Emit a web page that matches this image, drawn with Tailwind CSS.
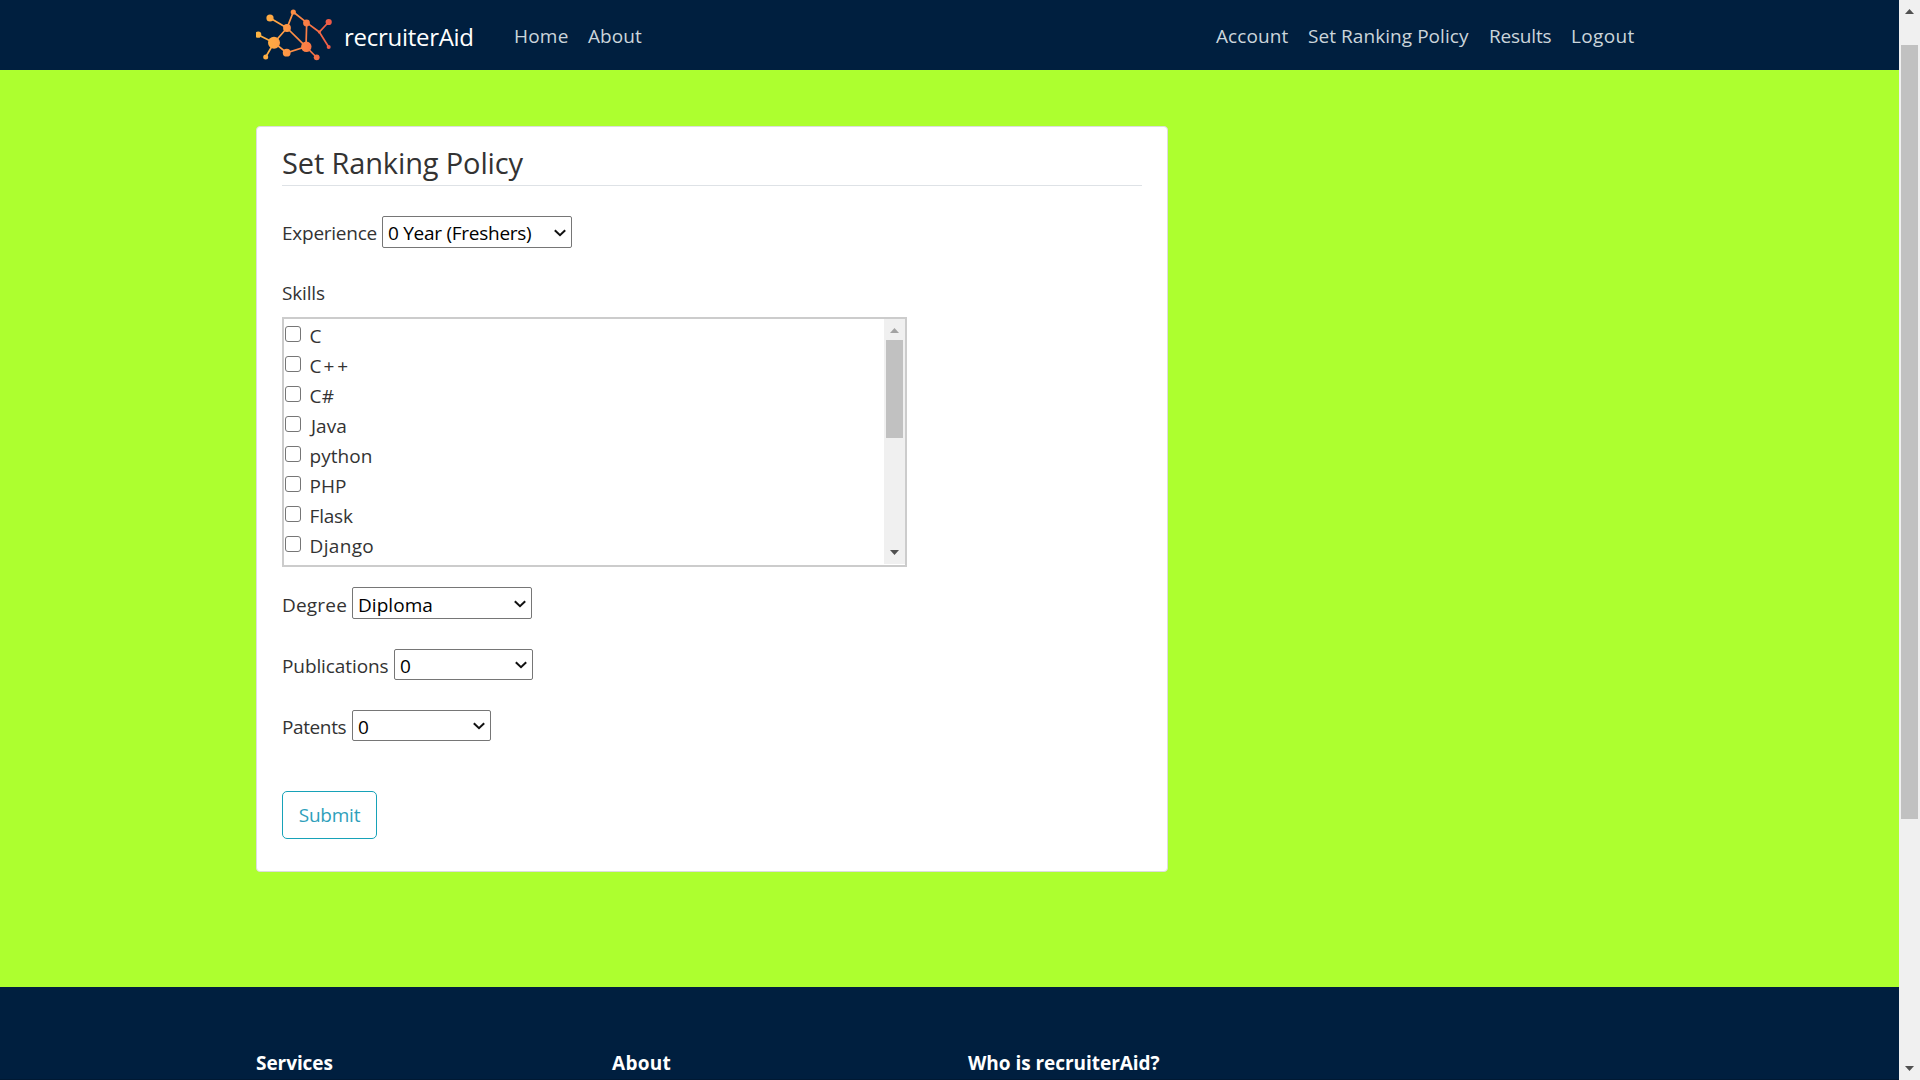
<!DOCTYPE html>
<html lang="en">
<head>
<meta charset="utf-8">
<title>recruiterAid - Set Ranking Policy</title>
<script src="https://cdn.jsdelivr.net/npm/@tailwindcss/browser@4"></script>
</head>
<body class="flex h-[1080px] w-[1920px] overflow-hidden bg-[#adff2f] font-['Open_Sans',sans-serif] text-[19px] leading-[30px] text-[#333333]">

<div class="flex w-[1899px] shrink-0 flex-col">
  <!-- Navbar -->
  <header class="flex h-[70px] shrink-0 items-center bg-[#001f3f] pl-[256px] pr-[264px] text-[#cbd5db]">
    <svg class="h-[52px] w-[76px] shrink-0" viewBox="0 -1 76 52" fill="none">
      <defs>
        <linearGradient id="g" gradientUnits="userSpaceOnUse" x1="0" y1="25" x2="76" y2="25">
          <stop offset="0" stop-color="#fdb643"/><stop offset=".25" stop-color="#ffa544"/><stop offset=".65" stop-color="#fb7f45"/><stop offset="1" stop-color="#ee5747"/>
        </linearGradient>
      </defs>
      <path stroke="url(#g)" stroke-width="1.7" d="M14 8 31 18 37.3 2 50.7 12.7 63.3 22 72.7 12M63.3 22 72.7 37M31 18 50 36.7 50.7 12.7M2 24.7 18 32.7 31 18M18 32.7 9.7 47M18 32.7 30.7 42.7 50 36.7 60.7 47.5"/>
      <g fill="url(#g)">
        <circle cx="14" cy="8" r="3.6"/><circle cx="37.3" cy="2" r="2.6"/><circle cx="31" cy="18" r="3.9"/><circle cx="2.2" cy="24.7" r="3.1"/>
        <circle cx="18" cy="32.7" r="6"/><circle cx="9.7" cy="47" r="2.5"/><circle cx="30.7" cy="42.7" r="3.9"/><circle cx="50.5" cy="13" r="3.4"/>
        <circle cx="50.3" cy="36.7" r="5.2"/><circle cx="60.7" cy="47.3" r="2.9"/><circle cx="63.3" cy="22" r="1.5"/><circle cx="72.7" cy="12" r="3.1"/><circle cx="72.7" cy="37" r="2"/>
      </g>
    </svg>
    <a class="ml-3 w-[169px] pt-[3px] text-[24px] tracking-[-0.28px] text-white">recruiterAid</a>
    <nav class="flex flex-1 pt-px">
      <a class="ml-px w-[74px] tracking-[0.2px]">Home</a>
      <a class="tracking-[0.07px]">About</a>
      <div class="ml-auto flex">
        <a class="w-[92px] tracking-[0.09px]">Account</a>
        <a class="w-[181px] tracking-[0.06px]">Set Ranking Policy</a>
        <a class="w-[82px] tracking-[-0.2px]">Results</a>
        <a class="w-[64px] tracking-[0.35px]">Logout</a>
      </div>
    </nav>
  </header>

  <main class="flex h-[917px] shrink-0 flex-col items-start pl-[256px] pt-14">
    <section class="flex h-[746px] w-[912px] flex-col items-start rounded-[4px] border border-[#dddddd] bg-white px-[25px] pt-[18px]">
      <h1 class="h-[41px] w-full border-b border-[#dee2e6] text-[29px] leading-[36px] tracking-[-0.14px]">Set Ranking Policy</h1>

      <div class="mt-[30px] flex h-8 items-center">
        <label class="w-[100px] pt-[2px] tracking-[-0.25px]">Experience</label>
        <div class="flex h-8 w-[190px] items-center rounded-[2px] border border-[#767676] pl-[5px] pr-[5px] text-black">
          <span class="flex-1 whitespace-nowrap pt-[2px] tracking-[-0.27px]">0 Year (Freshers)</span>
          <svg class="mt-px h-2 w-3" viewBox="0 0 12 8" fill="none" stroke="#111" stroke-width="2"><path d="m.8 1.2 5.2 5 5.2-5"/></svg>
        </div>
      </div>

      <div class="mt-[30px] h-[39px] tracking-[-0.16px]">Skills</div>
      <div class="flex h-[250px] w-[625px] shrink-0 border-2 border-[#cccccc]">
        <ul class="flex-1 pl-px pt-[2px]">
          <li class="flex h-[30px] items-center"><span class="-mt-1 mr-[8.5px] size-4 rounded-[3px] border border-[#767676]"></span>C</li>
          <li class="flex h-[30px] items-center"><span class="-mt-1 mr-[8.5px] size-4 rounded-[3px] border border-[#767676]"></span><span class="text-nowrap">C<span class="ml-0.5 tracking-[3px]">++</span></span></li>
          <li class="flex h-[30px] items-center tracking-[0.2px]"><span class="-mt-1 mr-[8.5px] size-4 rounded-[3px] border border-[#767676]"></span>C#</li>
          <li class="flex h-[30px] items-center"><span class="-mt-1 mr-[10px] size-4 rounded-[3px] border border-[#767676]"></span>Java</li>
          <li class="flex h-[30px] items-center tracking-[0.05px]"><span class="-mt-1 mr-[8.5px] size-4 rounded-[3px] border border-[#767676]"></span>python</li>
          <li class="flex h-[30px] items-center"><span class="-mt-1 mr-[8.5px] size-4 rounded-[3px] border border-[#767676]"></span>PHP</li>
          <li class="flex h-[30px] items-center tracking-[-0.18px]"><span class="-mt-1 mr-[8.5px] size-4 rounded-[3px] border border-[#767676]"></span>Flask</li>
          <li class="flex h-[30px] items-center tracking-[0.35px]"><span class="-mt-1 mr-[8.5px] size-4 rounded-[3px] border border-[#767676]"></span>Django</li>
        </ul>
        <div class="flex h-[245px] w-[21px] flex-col items-center bg-[#f0f0f0]">
          <svg class="mt-[9px] h-[5px] w-[9px]" viewBox="0 0 9 5" fill="#a3a3a3"><path d="M0 5 4.5 0 9 5z"/></svg>
          <div class="mt-[7px] h-[98px] w-[17px] bg-[#c1c1c1]"></div>
          <svg class="mb-[9px] mt-auto h-[5px] w-[9px]" viewBox="0 0 9 5" fill="#505050"><path d="M0 0 4.5 5 9 0z"/></svg>
        </div>
      </div>

      <div class="mt-5 flex h-8 items-center">
        <label class="w-[70px] pt-[3px] tracking-[0.2px]">Degree</label>
        <div class="flex h-8 w-[180px] items-center rounded-[2px] border border-[#767676] pl-[5px] pr-[5px] text-black">
          <span class="flex-1 pt-[3px] tracking-[0.05px]">Diploma</span>
          <svg class="mt-px h-2 w-3" viewBox="0 0 12 8" fill="none" stroke="#111" stroke-width="2"><path d="m.8 1.2 5.2 5 5.2-5"/></svg>
        </div>
      </div>

      <div class="mt-[30px] flex h-[31px] items-center">
        <label class="w-[112px] pt-[3px] tracking-[-0.1px]">Publications</label>
        <div class="flex h-[31px] w-[139px] items-center rounded-[2px] border border-[#767676] pl-[5px] pr-[5px] text-black">
          <span class="flex-1 pt-[3px]">0</span>
          <svg class="h-2 w-3" viewBox="0 0 12 8" fill="none" stroke="#111" stroke-width="2"><path d="m.8 1.2 5.2 5 5.2-5"/></svg>
        </div>
      </div>

      <div class="mt-[30px] flex h-[31px] items-center">
        <label class="w-[70px] pt-[3px] tracking-[-0.39px]">Patents</label>
        <div class="flex h-[31px] w-[139px] items-center rounded-[2px] border border-[#767676] pl-[5px] pr-[5px] text-black">
          <span class="flex-1 pt-[3px]">0</span>
          <svg class="h-2 w-3" viewBox="0 0 12 8" fill="none" stroke="#111" stroke-width="2"><path d="m.8 1.2 5.2 5 5.2-5"/></svg>
        </div>
      </div>

      <button class="mt-[50px] h-12 w-[95px] rounded-[5px] border border-[#17a2b8] tracking-[-0.22px] text-[#2f9fbb]">Submit</button>
    </section>
  </main>

  <footer class="flex h-[93px] shrink-0 border-b border-[#001933] bg-[#001f3f] pl-[256px] pt-[61px] font-bold text-white">
    <div class="w-[356px] tracking-[-0.06px]">Services</div>
    <div class="w-[356px] tracking-[0.28px]">About</div>
    <div class="tracking-[-0.04px]">Who is recruiterAid?</div>
  </footer>
</div>

<!-- Page scrollbar -->
<div class="flex h-[1080px] w-[21px] shrink-0 flex-col items-center bg-[#f0f0f0]">
  <svg class="mt-[9px] h-[5px] w-[9px]" viewBox="0 0 9 5" fill="#505050"><path d="M0 5 4.5 0 9 5z"/></svg>
  <div class="mt-[31px] h-[774px] w-[17px] bg-[#c1c1c1]"></div>
  <svg class="mb-[9px] mt-auto h-[5px] w-[9px]" viewBox="0 0 9 5" fill="#505050"><path d="M0 0 4.5 5 9 0z"/></svg>
</div>
</body>
</html>
